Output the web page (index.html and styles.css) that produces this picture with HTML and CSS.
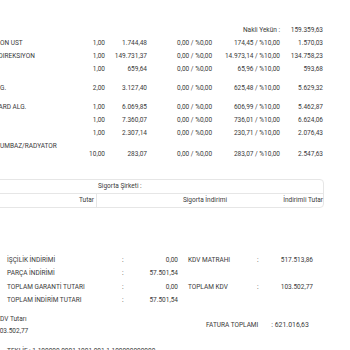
FILE: index.html
```html
<!DOCTYPE html>
<html lang="tr">
<head>
<meta charset="utf-8">
<link rel="stylesheet" href="styles.css">
</head>
<body>
<div class="page">
  <div class="items">
    <div class="row">
      <span class="c-kdv">Nakli Yekün :</span><span class="c-tot">159.359,63</span>
    </div>
    <div class="row">
      <span class="c-desc">ON UST</span><span class="c-qty">1,00</span><span class="c-price">1.744,48</span><span class="c-disc">0,00 / %0,00</span><span class="c-kdv">174,45 / %10,00</span><span class="c-tot">1.570,03</span>
    </div>
    <div class="row">
      <span class="c-desc shift">DIREKSIYON</span><span class="c-qty">1,00</span><span class="c-price">149.731,37</span><span class="c-disc">0,00 / %0,00</span><span class="c-kdv">14.973,14 / %10,00</span><span class="c-tot">134.758,23</span>
    </div>
    <div class="row">
      <span class="c-desc"></span><span class="c-qty">1,00</span><span class="c-price">659,64</span><span class="c-disc">0,00 / %0,00</span><span class="c-kdv">65,96 / %10,00</span><span class="c-tot">593,68</span>
    </div>
    <div class="row spaced">
      <span class="c-desc">G.</span><span class="c-qty">2,00</span><span class="c-price">3.127,40</span><span class="c-disc">0,00 / %0,00</span><span class="c-kdv">625,48 / %10,00</span><span class="c-tot">5.629,32</span>
    </div>
    <div class="row spaced">
      <span class="c-desc shift">ARD ALG.</span><span class="c-qty">1,00</span><span class="c-price">6.069,85</span><span class="c-disc">0,00 / %0,00</span><span class="c-kdv">606,99 / %10,00</span><span class="c-tot">5.462,87</span>
    </div>
    <div class="row">
      <span class="c-desc"></span><span class="c-qty">1,00</span><span class="c-price">7.360,07</span><span class="c-disc">0,00 / %0,00</span><span class="c-kdv">736,01 / %10,00</span><span class="c-tot">6.624,06</span>
    </div>
    <div class="row">
      <span class="c-desc"></span><span class="c-qty">1,00</span><span class="c-price">2.307,14</span><span class="c-disc">0,00 / %0,00</span><span class="c-kdv">230,71 / %10,00</span><span class="c-tot">2.076,43</span>
    </div>
    <div class="row tall">
      <span class="c-desc">UMBAZ/RADYATOR</span><span class="c-qty">10,00</span><span class="c-price">283,07</span><span class="c-disc">0,00 / %0,00</span><span class="c-kdv">283,07 / %10,00</span><span class="c-tot">2.547,63</span>
    </div>
  </div>

  <div class="ins">
    <div class="ins-top">Sigorta Şirketi :</div>
    <div class="ins-head">
      <span class="h-tutar">Tutar</span>
      <span class="h-ind">Sigorta İndirimi</span>
      <span class="h-net">İndirimli Tutar</span>
    </div>
  </div>

  <div class="sums">
    <div class="sum-grid left">
      <span>İŞÇİLİK İNDİRİMİ</span><span>:</span><span class="num">0,00</span>
      <span>PARÇA İNDİRİMİ</span><span>:</span><span class="num">57.501,54</span>
      <span>TOPLAM GARANTİ TUTARI</span><span>:</span><span class="num">0,00</span>
      <span>TOPLAM İNDİRİM TUTARI</span><span>:</span><span class="num">57.501,54</span>
    </div>
    <div class="sum-grid right">
      <span>KDV MATRAHI</span><span>:</span><span class="num">517.513,86</span>
      <span>TOPLAM KDV</span><span>:</span><span class="num">103.502,77</span>
    </div>
  </div>

  <div class="totals">
    <div class="kdv-box">
      <div>KDV Tutarı</div>
      <div>103.502,77</div>
    </div>
    <div class="grand">
      <span class="g-label">FATURA TOPLAMI</span>
      <span class="g-val">: 621.016,63</span>
    </div>
  </div>

  <div class="footer-line">TEKLİF : 1.100000 0001 1001 001 1 100000000000</div>
</div>
</body>
</html>
```

FILE: styles.css
```css
html, body {
  margin: 0;
  padding: 0;
  background: #ffffff;
}

body {
  width: 350px;
  height: 350px;
  overflow: hidden;
  font-family: Roboto, "Noto Sans", sans-serif;
  font-size: 6.5px;
  color: #3a3a3a;
}

.page {
  padding-top: 24px;
}

.items {
  display: flex;
  flex-direction: column;
}

.row {
  display: grid;
  grid-template-columns: 88px 17px 42px 66px 67px 43px;
  line-height: 13px;
  white-space: nowrap;
  align-items: start;
}

.row.spaced {
  margin-top: 6px;
}

.c-desc {
  grid-column: 1;
  overflow: hidden;
}

.shift {
  text-indent: -1.5px;
}

.c-qty {
  grid-column: 2;
  text-align: right;
}

.c-price {
  grid-column: 3;
  text-align: right;
}

.c-disc {
  grid-column: 4;
  padding-left: 30px;
}

.c-kdv {
  grid-column: 5;
  text-align: right;
}

.c-tot {
  grid-column: 6;
  text-align: right;
}

.row.tall .c-qty,
.row.tall .c-price,
.row.tall .c-disc,
.row.tall .c-kdv,
.row.tall .c-tot {
  padding-top: 8px;
}

.ins {
  margin-top: 18px;
  margin-left: -20px;
  width: 344px;
  box-sizing: border-box;
  border: 1px solid #e6e6e6;
  border-radius: 4px;
  line-height: 13px;
  white-space: nowrap;
}

.ins-top {
  padding-left: 117px;
  border-bottom: 1px solid #e6e6e6;
}

.ins-head {
  display: grid;
  grid-template-columns: 116px 133px 1fr;
}

.h-tutar {
  text-align: right;
  padding-right: 2px;
  border-right: 1px solid #e6e6e6;
}

.h-ind {
  text-align: right;
  padding-right: 3px;
}

.h-net {
  text-align: right;
  padding-right: 0;
}

.sums {
  display: flex;
  gap: 10px;
  margin-top: 46px;
  padding-left: 7px;
  line-height: 13.3px;
  white-space: nowrap;
}

.sum-grid {
  display: grid;
}

.sum-grid.left {
  grid-template-columns: 115px 8px 48px;
}

.sum-grid.right {
  grid-template-columns: 69px 8px 48px;
}

.num {
  text-align: right;
}

.totals {
  display: flex;
  align-items: center;
  margin-top: 6px;
  white-space: nowrap;
}

.kdv-box {
  margin-left: -4px;
  line-height: 12px;
  width: 210px;
}

.grand {
  display: flex;
  align-items: baseline;
  gap: 13px;
}

.g-val {
  font-size: 6.9px;
}

.footer-line {
  margin-top: 8px;
  padding-left: 7px;
  line-height: 12px;
  white-space: nowrap;
}
```
